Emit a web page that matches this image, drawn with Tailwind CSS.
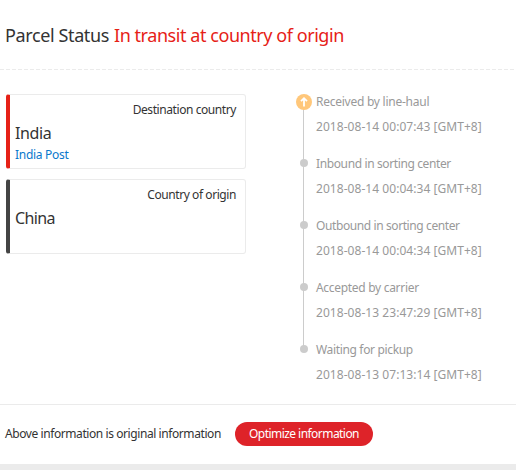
<!DOCTYPE html>
<html lang="en">
<head>
<meta charset="utf-8">
<title>Parcel Status</title>
<script src="https://cdn.jsdelivr.net/npm/@tailwindcss/browser@4"></script>
</head>
<body class="h-[470px] w-[516px] overflow-hidden bg-white font-['Noto_Sans','DejaVu_Sans_Condensed',sans-serif] text-[12px] leading-[18px] text-[#333] whitespace-nowrap">
<header class="flex h-[69px] items-center gap-[5px] pl-[5px] text-[18px]">
  <h1 class="tracking-[-0.38px]">Parcel Status</h1><span class="tracking-[-0.44px] text-[#e62117]">In transit at country of origin</span>
</header>
<div class="h-px bg-[repeating-linear-gradient(90deg,#ebebeb_0_4px,#fff_4px_6px)]"></div>
<main class="flex h-[334px] pt-6 pl-[6px]">
  <section class="flex w-[240px] flex-col gap-[10px]">
    <article class="h-[75px] rounded-[3px] border border-l-4 border-[#ebebeb] border-l-[#e62117] pt-[6px] pr-[9px] pl-[5px]">
      <p class="text-right tracking-[-0.42px]">Destination country</p>
      <h2 class="mt-[2px] mb-px text-[16px] leading-6 tracking-[-0.4px]">India</h2>
      <p class="text-[#0a78cc] tracking-[-0.3px]">India Post</p>
    </article>
    <article class="h-[75px] rounded-[3px] border border-l-4 border-[#ebebeb] border-l-[#444] pt-[6px] pr-[9px] pl-[5px]">
      <p class="text-right tracking-[-0.42px]">Country of origin</p>
      <h2 class="mt-[2px] text-[16px] leading-6 tracking-[-0.6px]">China</h2>
    </article>
  </section>
  <section class="ml-[50px] flex text-[#999]">
    <svg class="h-[264px] w-4 shrink-0" viewBox="0 0 16 264">
      <path d="M7.5 8V255" stroke="#ccc"/>
      <circle cx="8" cy="8" r="8" fill="#ffc77a"/>
      <path d="M8 12.5V4.2M5 7.2L8 4.2L11 7.2" fill="none" stroke="#fff" stroke-width="1.8"/>
      <g fill="#ccc"><circle cx="8" cy="69" r="4"/><circle cx="8" cy="131" r="4"/><circle cx="8" cy="193" r="4"/><circle cx="8" cy="255" r="4"/></g>
    </svg>
    <ol class="ml-1 flex flex-col gap-3 leading-[25px] -mt-[5px]">
      <li><p class="tracking-[-0.25px]">Received by line-haul</p><p class="tracking-[0.05px]">2018-08-14 00:07:43 [GMT+8]</p></li>
      <li><p class="tracking-[-0.38px]">Inbound in sorting center</p><p class="tracking-[0.05px]">2018-08-14 00:04:34 [GMT+8]</p></li>
      <li><p class="tracking-[-0.4px]">Outbound in sorting center</p><p class="tracking-[0.05px]">2018-08-14 00:04:34 [GMT+8]</p></li>
      <li><p class="tracking-[-0.3px]">Accepted by carrier</p><p class="tracking-[0.05px]">2018-08-13 23:47:29 [GMT+8]</p></li>
      <li><p class="tracking-[-0.34px]">Waiting for pickup</p><p class="tracking-[0.05px]">2018-08-13 07:13:14 [GMT+8]</p></li>
    </ol>
  </section>
</main>
<footer class="flex h-[66px] items-start border-t border-b-[6px] border-[#ebebeb] pt-[17px] pl-[5px]">
  <p class="w-[230px] leading-6 tracking-[-0.42px]">Above information is original information</p>
  <button class="h-6 w-[138px] rounded-full bg-[#de2329] leading-6 tracking-[-0.55px] text-white">Optimize information</button>
</footer>
</body>
</html>
